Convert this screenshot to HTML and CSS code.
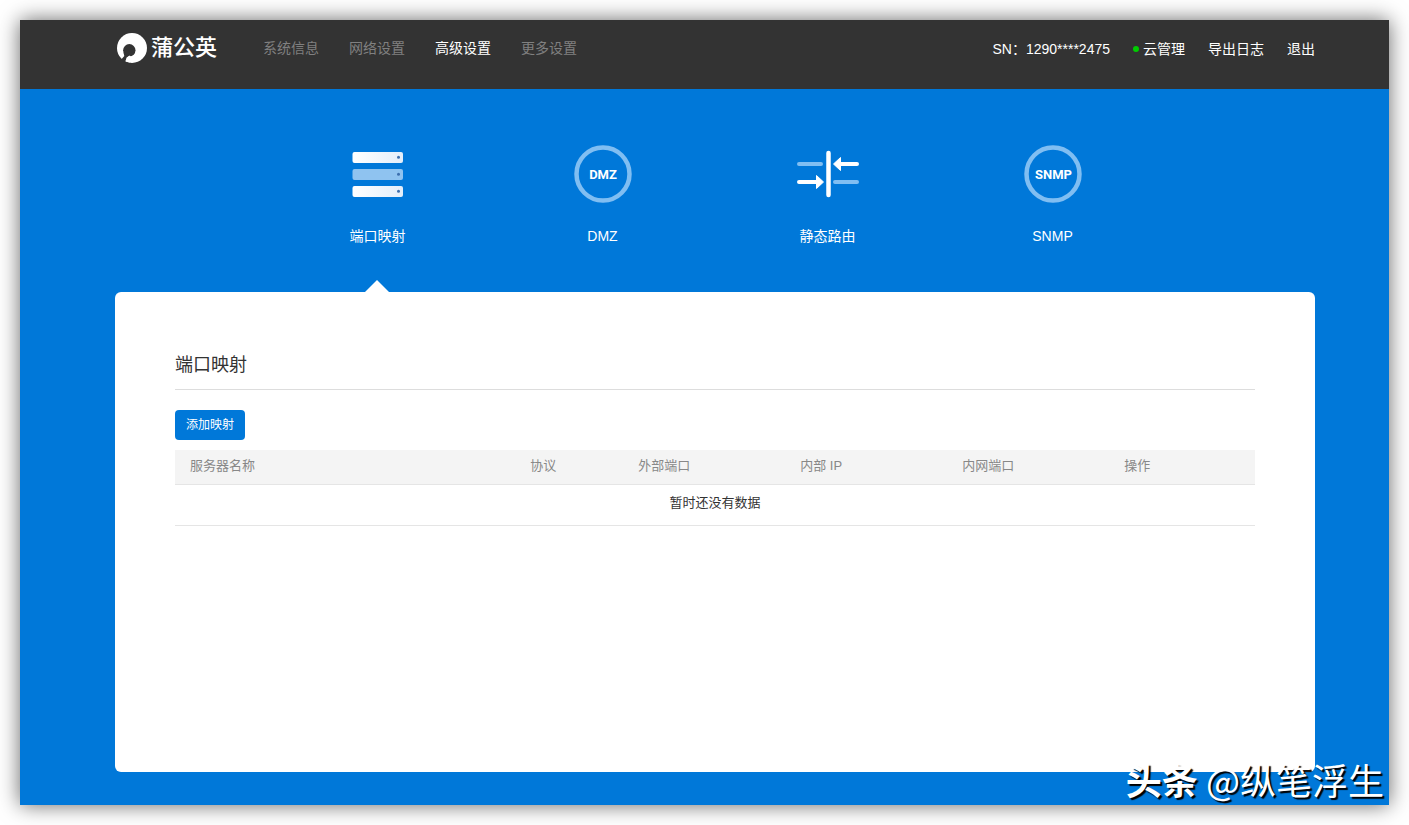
FILE: index.html
```html
<!DOCTYPE html>
<html lang="zh-CN">
<head>
<meta charset="utf-8">
<title>蒲公英 - 端口映射</title>
<link rel="stylesheet" href="styles.css">
</head>
<body>
<div class="window">
  <header class="topbar">
    <a class="brand" href="#">
      <svg class="brand-mark" viewBox="0 0 30 30" aria-hidden="true">
        <circle cx="15" cy="15" r="15" fill="#fff"/>
        <circle cx="12.300" cy="17.300" r="6.200" fill="#333"/>
        <path d="M6.500 19.500L7.300 23l-3.500 4 4.200 3 1-3 2.500-4z" fill="#333"/>
        <path d="M9.600 24.600l3.200-2 2 2.400-2 4.600-4.300-1.400z" fill="#fff"/>
      </svg>
      <span class="brand-name">蒲公英</span>
    </a>
    <nav class="menu">
      <a href="#">系统信息</a>
      <a href="#">网络设置</a>
      <a class="current" href="#">高级设置</a>
      <a href="#">更多设置</a>
    </nav>
    <div class="account">
      <span>SN：1290****2475</span>
      <a class="cloud" href="#">云管理</a>
      <a href="#">导出日志</a>
      <a href="#">退出</a>
    </div>
  </header>
  <main class="page">
    <nav class="tabs">
      <a class="tab active" href="#">
        <svg class="tab-icon" viewBox="0 0 64 64" aria-hidden="true">
          <defs><linearGradient id="bar"><stop offset="0" stop-color="#fff"/><stop offset="1" stop-color="#e3eefa"/></linearGradient></defs>
          <rect x="6.500" y="10" width="50.500" height="11" rx="2" fill="url(#bar)"/>
          <rect x="6.500" y="27" width="50.500" height="11" rx="2" fill="#8fc3f0"/>
          <rect x="6.500" y="44" width="50.500" height="11" rx="2" fill="url(#bar)"/>
          <g fill="#3d6fae"><circle cx="52.500" cy="15.300" r="1.500"/><circle cx="52.500" cy="32.300" r="1.500"/><circle cx="52.500" cy="49.300" r="1.500"/></g>
        </svg>
        <span>端口映射</span>
      </a>
      <a class="tab" href="#">
        <svg class="tab-icon" viewBox="0 0 64 64" aria-hidden="true">
          <circle cx="32" cy="32" r="26.500" fill="none" stroke="#80bef2" stroke-width="4.500"/>
          <text class="badge-text" x="32" y="37" text-anchor="middle">DMZ</text>
        </svg>
        <span>DMZ</span>
      </a>
      <a class="tab" href="#">
        <svg class="tab-icon" viewBox="0 0 64 64" aria-hidden="true">
          <g fill="none" stroke-width="4" stroke-linecap="round">
            <path d="M3 22h22M39 40h22" stroke="#80bef2"/>
            <path d="M32.500 11v42" stroke="#fff" stroke-width="4.500"/>
            <path d="M61 22H43M3 40h19" stroke="#fff"/>
          </g>
          <path d="M37.500 22l7-6.500v13zM27.500 40l-7-6.500v13z" fill="#fff" stroke="#fff" stroke-linejoin="round"/>
        </svg>
        <span>静态路由</span>
      </a>
      <a class="tab" href="#">
        <svg class="tab-icon" viewBox="0 0 64 64" aria-hidden="true">
          <circle cx="32" cy="32" r="26.500" fill="none" stroke="#80bef2" stroke-width="4.500"/>
          <text class="badge-text" x="32.500" y="37" text-anchor="middle">SNMP</text>
        </svg>
        <span>SNMP</span>
      </a>
    </nav>
    <section class="panel">
      <h1>端口映射</h1>
      <button class="add" type="button">添加映射</button>
      <table class="rules">
        <thead>
          <tr>
            <th class="col-name" scope="col">服务器名称</th>
            <th class="col-protocol" scope="col">协议</th>
            <th class="col-port" scope="col">外部端口</th>
            <th class="col-port" scope="col">内部 IP</th>
            <th class="col-port" scope="col">内网端口</th>
            <th scope="col">操作</th>
          </tr>
        </thead>
        <tbody>
          <tr><td colspan="6">暂时还没有数据</td></tr>
        </tbody>
      </table>
    </section>
  </main>
  <div class="watermark"><b>头条</b> @纵笔浮生</div>
</div>
</body>
</html>
```
FILE: styles.css
```css
* {
  box-sizing: border-box;
}

body {
  margin: 0;
  padding: 20px;
  min-height: 100vh;
  display: flex;
  background: #fff;
  color: #333;
  font-family: "Liberation Sans", "Noto Sans CJK SC", sans-serif;
  font-size: 14px;
  line-height: 20px;
}

a {
  color: inherit;
  text-decoration: none;
}

.window {
  position: relative;
  flex: 1;
  display: flex;
  flex-direction: column;
  background: #0078d9;
  box-shadow: 0 0 20px rgba(0, 0, 0, 0.6);
}

.topbar {
  display: flex;
  align-items: flex-start;
  padding: 12px 74px 23px 97px;
  background: #333;
  color: #fff;
}

.brand {
  display: flex;
  align-items: center;
  gap: 4px;
  height: 32px;
}

.brand-mark {
  width: 30px;
  height: 30px;
}

.brand-name {
  font-size: 22px;
  font-weight: 500;
  line-height: 32px;
}

.menu {
  display: flex;
  gap: 30px;
  margin-left: 46px;
  line-height: 32px;
  color: #808080;
}

.menu .current {
  color: #fff;
}

.account {
  display: flex;
  gap: 23px;
  margin-left: auto;
  line-height: 34px;
}

.cloud {
  display: flex;
  align-items: center;
  gap: 4px;
}

.cloud::before {
  content: "";
  width: 6px;
  height: 6px;
  border-radius: 50%;
  background: #0c0;
}

.page {
  flex: 1;
  display: flex;
  flex-direction: column;
  padding: 53px 74px 33px 95px;
}

.tabs {
  display: flex;
  width: 75%;
  margin: 0 auto;
}

.tab {
  position: relative;
  flex: 1;
  display: flex;
  flex-direction: column;
  align-items: center;
  gap: 20px;
  height: 150px;
  color: #fff;
}

.tab.active::after {
  content: "";
  position: absolute;
  bottom: 0;
  left: 50%;
  margin-left: -13px;
  border: 12px solid transparent;
  border-top-width: 0;
  border-bottom-color: #fff;
}

.tab-icon {
  width: 64px;
  height: 64px;
}

.badge-text {
  fill: #fff;
  font-family: Roboto, sans-serif;
  font-size: 13px;
  font-weight: 700;
}

.panel {
  flex: 1;
  padding: 60px;
  border-radius: 6px;
  background: #fff;
}

h1 {
  margin: 0 0 20px;
  padding-bottom: 10px;
  border-bottom: 1px solid #ddd;
  font-size: 18px;
  font-weight: 400;
  line-height: 27px;
}

.add {
  display: block;
  height: 30px;
  padding: 0 11px;
  border: 0;
  border-radius: 4px;
  background: #0078d9;
  color: #fff;
  font: inherit;
  font-size: 12px;
}

.rules {
  width: 100%;
  margin-top: 10px;
  border-collapse: collapse;
  table-layout: fixed;
  font-size: 13px;
}

.rules th {
  height: 34px;
  padding: 0 15px 1px;
  border-bottom: 1px solid #e5e5e5;
  background: #f4f4f4;
  color: #888;
  font-weight: 400;
  text-align: left;
}

.rules td {
  height: 41px;
  padding: 0 15px 3px;
  border-bottom: 1px solid #e5e5e5;
  text-align: center;
}

.col-name {
  width: 31.5%;
}

.col-protocol {
  width: 10%;
}

.col-port {
  width: 15%;
}

.watermark {
  position: absolute;
  right: 5px;
  bottom: 2px;
  color: #fff;
  font-family: "Noto Sans CJK SC", sans-serif;
  font-size: 36px;
  line-height: 48px;
  text-shadow: 2px 2px 1px #000;
}
```
